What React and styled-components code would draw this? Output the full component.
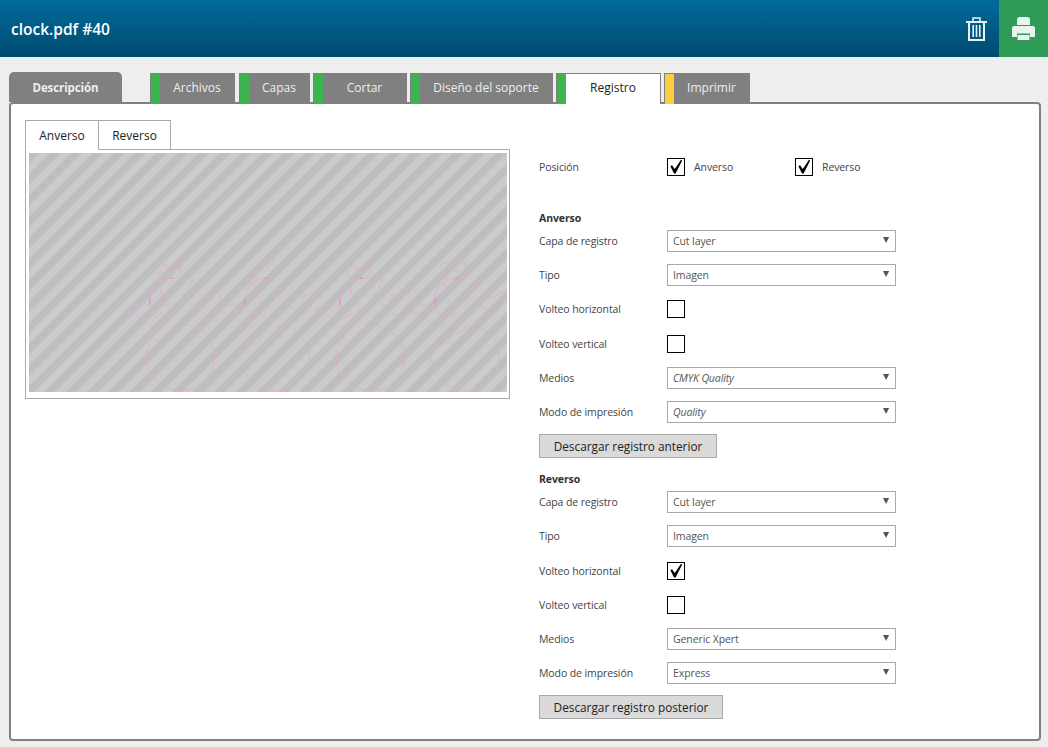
import styled, { createGlobalStyle } from "styled-components";

const GlobalStyle = createGlobalStyle`
  html, body {
    margin: 0;
    padding: 0;
    background: #eeeeee;
  }

  body {
    font-family: "Open Sans", "Liberation Sans", sans-serif;
    font-size: 10.5px;
    letter-spacing: -0.1px;
    color: #333;
  }
`;

const TABS = [
  { label: "Archivos", width: 85, mark: "#3cb44f" },
  { label: "Capas", width: 71, mark: "#3cb44f" },
  { label: "Cortar", width: 94, mark: "#3cb44f" },
  { label: "Diseño del soporte", width: 143, mark: "#3cb44f" },
  { label: "Registro", width: 105, mark: "#3cb44f", active: true },
  { label: "Imprimir", width: 86, mark: "#fccd3e" },
];

const FRONT = [
  { kind: "select", label: "Capa de registro", value: "Cut layer" },
  { kind: "select", label: "Tipo", value: "Imagen" },
  { kind: "check", label: "Volteo horizontal" },
  { kind: "check", label: "Volteo vertical" },
  { kind: "select", label: "Medios", value: "CMYK Quality", italic: true },
  { kind: "select", label: "Modo de impresión", value: "Quality", italic: true },
];

const BACK = [
  { kind: "select", label: "Capa de registro", value: "Cut layer" },
  { kind: "select", label: "Tipo", value: "Imagen" },
  { kind: "check", label: "Volteo horizontal", checked: true },
  { kind: "check", label: "Volteo vertical" },
  { kind: "select", label: "Medios", value: "Generic Xpert" },
  { kind: "select", label: "Modo de impresión", value: "Express" },
];

const App = () => {
  return (
    <>
      <GlobalStyle />
      <Header>
        <Title>clock.pdf #40</Title>
        <TrashButton aria-label="Eliminar">
          <TrashIcon />
        </TrashButton>
        <PrintButton aria-label="Imprimir">
          <PrintIcon />
        </PrintButton>
      </Header>

      <Main>
        <TabBar>
          <DescriptionTab>Descripción</DescriptionTab>
          <StepTabs>
            {TABS.map((tab) => (
              <StepTab key={tab.label} $width={tab.width} $mark={tab.mark} $active={tab.active}>
                <span>{tab.label}</span>
              </StepTab>
            ))}
          </StepTabs>
        </TabBar>

        <Panel>
          <PreviewColumn>
            <SideTabs>
              <SideTab $active>Anverso</SideTab>
              <SideTab>Reverso</SideTab>
            </SideTabs>
            <PreviewBox>
              <Preview />
            </PreviewBox>
          </PreviewColumn>

          <FormColumn>
            <PositionRow>
              <FieldLabel>Posición</FieldLabel>
              <PositionOption>
                <Checkbox $checked />
                Anverso
              </PositionOption>
              <PositionOption>
                <Checkbox $checked />
                Reverso
              </PositionOption>
            </PositionRow>

            <SectionTitle $top={28.5}>Anverso</SectionTitle>
            <Fields rows={FRONT} />
            <DownloadButton $width={178}>Descargar registro anterior</DownloadButton>

            <SectionTitle $top={16}>Reverso</SectionTitle>
            <Fields rows={BACK} />
            <DownloadButton $width={184}>Descargar registro posterior</DownloadButton>
          </FormColumn>
        </Panel>
      </Main>
    </>
  );
};

export default App;

const Fields = ({ rows }) => {
  return rows.map((row) => (
    <FieldRow key={row.label}>
      <FieldLabel>{row.label}</FieldLabel>
      {row.kind === "select" ? (
        <SelectBox $italic={row.italic}>
          {row.value}
          <SelectArrow viewBox="0 0 8 8">
            <path d="M0 1h7L3.5 8z" />
          </SelectArrow>
        </SelectBox>
      ) : (
        <Checkbox $checked={row.checked} />
      )}
    </FieldRow>
  ));
};

const Checkbox = ({ $checked }) => {
  return (
    <CheckSquare>
      {$checked && (
        <svg viewBox="1 1 16 16" width="16" height="16">
          <path d="M3.4 8.2 L5 7.2 L7.8 11 L14 1.8 L15.2 2.4 L8.6 15.4 L7 15.4 Z" fill="#000" />
        </svg>
      )}
    </CheckSquare>
  );
};

const TrashIcon = () => {
  return (
    <svg viewBox="0 0 21 24" width="21" height="24" fill="none" stroke="#e8f0f4">
      <path d="M0 5h21" strokeWidth="2" />
      <path d="M7 4.5V1h7v3.5" strokeWidth="1.5" />
      <path d="M3 5v18h15V5" strokeWidth="2" />
      <path d="M7.2 8v12M10.5 8v12M13.8 8v12" strokeWidth="1.6" />
    </svg>
  );
};

const PrintIcon = () => {
  return (
    <svg viewBox="0 0 23 23" width="23" height="23" fill="#e9f4ee">
      <path d="M5 8V2.5Q5 0 7.5 0H15.5Q18 0 18 2.5V8Z" />
      <path d="M2 9H21Q23 9 23 11V20H18V16.5H5V20H0V11Q0 9 2 9Z" />
      <rect x="5.5" y="18" width="12" height="5" />
    </svg>
  );
};

// the cut path of one clock, repeated along the sheet
const CLOCK_PATH =
  "M35 10 C38 8 41 7 43 8 C45 11 47 15 50 17 C53 13 56 8 58 5 C60 9 61 13 60 17 C59 21 58 23 57 23 C54 24 52 22 50 23 C47 24 45 26 43 25 C40 22 37 20 38 17 C37 14 36 12 35 10 Z " +
  "M43 25 C38 28 33 31 33 33 C31 37 30 43 30 52 C22 49 13 49 5 55 C9 58 12 59 15 60 C18 61 20 61 22 63 C24 67 26 70 28 70 C31 72 33 72 35 72 C39 71 41 69 43 67 C47 64 50 60 50 57 C48 52 45 48 43 43 C42 37 40 32 38 28 " +
  "M36 63 C38 58 43 57 46 60 M30 52 C31 55 35 58 36 63 " +
  "M72 25 C74 29 76 33 78 37 C81 40 84 42 87 42 C91 41 95 38 98 37 C100 38 100 41 100 43 C98 48 95 53 92 57 C90 60 87 61 85 60 C82 59 80 55 78 53 C74 50 68 48 63 43 C64 40 66 37 68 35 C70 32 71 28 72 25 Z " +
  "M33 82 C36 86 39 88 42 88 C45 86 46 80 48 77 C51 76 53 79 55 78 C58 76 60 73 63 70 C81 71 94.5 85 94.5 102.5 C94.5 121 79 135.5 60.5 135.5 C42 135.5 26.5 121 26.5 102.5 C26.5 95 29 88 33 82 Z";

const Preview = () => {
  return (
    <PreviewSvg viewBox="0 0 478 239">
      <defs>
        <pattern id="sheet-stripes" width="15" height="15" patternUnits="userSpaceOnUse" patternTransform="rotate(45)">
          <rect width="15" height="15" fill="#cbcbcb" />
          <rect width="7.5" height="15" fill="#bebebe" />
        </pattern>
      </defs>
      <rect width="478" height="239" fill="url(#sheet-stripes)" />
      {[0, 95, 190, 285].map((offset) => (
        <g key={offset} transform={`translate(${91 + offset} 102)`}>
          <path d={CLOCK_PATH} fill="none" stroke="#deaad6" strokeWidth="0.8" />
          <path d="M30 43v7M50 23h3" fill="none" stroke="#e87ccf" strokeWidth="1" />
        </g>
      ))}
    </PreviewSvg>
  );
};

const Header = styled.header`
  display: flex;
  align-items: stretch;
  height: 57px;
  background: linear-gradient(#006b9c, #004b6e);
`;

const Title = styled.h1`
  flex: 1;
  align-self: center;
  margin: 0;
  padding-left: 11px;
  font-size: 15.5px;
  font-weight: 600;
  letter-spacing: 0;
  color: #fff;
`;

const TrashButton = styled.div`
  display: flex;
  align-items: center;
  justify-content: flex-end;
  padding-right: 12px;
`;

const PrintButton = styled.div`
  display: flex;
  align-items: center;
  justify-content: center;
  width: 49px;
  height: 57px;
  background: #2e9b57;
`;

const Main = styled.main`
  padding: 15px 7px 6px 9px;
`;

const TabBar = styled.nav`
  display: flex;
  align-items: flex-end;
  height: 32px;
  position: relative;
  z-index: 1;
`;

const DescriptionTab = styled.div`
  display: flex;
  align-items: center;
  justify-content: center;
  box-sizing: border-box;
  width: 113px;
  height: 30px;
  margin-bottom: 2px;
  background: #808080;
  border-radius: 5px 5px 0 0;
  font-size: 11.5px;
  font-weight: 700;
  color: #eee;
`;

const StepTabs = styled.div`
  display: flex;
  gap: 3px;
  margin-left: 28px;
`;

const StepTab = styled.div`
  display: flex;
  box-sizing: border-box;
  width: ${(p) => p.$width}px;
  height: 31px;
  border: 1px solid #808080;
  border-bottom: 0;
  background: ${(p) => (p.$active ? "#fff" : "#808080")};
  color: ${(p) => (p.$active ? "#222" : "#eee")};
  font-size: 12px;
  letter-spacing: 0;

  &:first-child {
    margin-right: 1px;
  }

  &::before {
    content: "";
    width: 9px;
    flex: none;
    background: ${(p) => p.$mark};
  }

  span {
    flex: 1;
    text-align: center;
    line-height: 27px;
  }
`;

const Panel = styled.section`
  display: flex;
  box-sizing: border-box;
  height: 639px;
  margin-top: -2px;
  padding: 16px 0 0 14px;
  border: 2px solid #808080;
  border-radius: 4px;
  background: #fff;
`;

const PreviewColumn = styled.div`
  width: 485px;
  flex: none;
`;

const SideTabs = styled.div`
  display: flex;
  position: relative;
  margin-bottom: -1px;
`;

const SideTab = styled.div`
  box-sizing: border-box;
  height: 30px;
  width: ${(p) => (p.$active ? 74 : 72)}px;
  border: 1px solid #a9a9a9;
  border-left-width: ${(p) => (p.$active ? 1 : 0)}px;
  border-bottom-color: ${(p) => (p.$active ? "#fff" : "#a9a9a9")};
  background: #fff;
  text-align: center;
  line-height: 29px;
  font-size: 12px;
  letter-spacing: 0;
  color: #222;
`;

const PreviewBox = styled.div`
  box-sizing: border-box;
  height: 250px;
  padding: 3px 2px 6px 3px;
  border: 1px solid #a9a9a9;
`;

const PreviewSvg = styled.svg`
  display: block;
  width: 478px;
  height: 239px;
`;

const FormColumn = styled.div`
  margin-left: 29px;
  width: 400px;
`;

const FieldLabel = styled.label`
  width: 128px;
  flex: none;
  color: #444;
`;

const PositionRow = styled.div`
  display: flex;
  align-items: center;
  height: 34px;
  margin-top: 30px;
`;

const PositionOption = styled.div`
  display: flex;
  align-items: center;
  gap: 9px;
  width: 128px;
  flex: none;
  color: #444;
`;

const SectionTitle = styled.h2`
  margin: ${(p) => p.$top}px 0 0;
  height: 11px;
  line-height: 11px;
  font-size: 10.5px;
  font-weight: 700;
  color: #333;
`;

const FieldRow = styled.div`
  display: flex;
  align-items: center;
  height: 34.3px;
`;

const SelectBox = styled.div`
  display: flex;
  align-items: center;
  justify-content: space-between;
  box-sizing: border-box;
  width: 229px;
  height: 22px;
  padding: 0 5px;
  border: 1px solid #a9a9a9;
  background: #fff;
  font-style: ${(p) => (p.$italic ? "italic" : "normal")};
  color: #555;
`;

const SelectArrow = styled.svg`
  width: 7px;
  height: 7px;
  margin-bottom: 3px;
  fill: #555;
`;

const CheckSquare = styled.span`
  display: flex;
  align-items: center;
  justify-content: center;
  box-sizing: border-box;
  width: 18px;
  height: 18px;
  flex: none;
  border: 1px solid #000;
  background: #fff;
`;

const DownloadButton = styled.button`
  display: block;
  box-sizing: border-box;
  width: ${(p) => p.$width}px;
  height: 24px;
  margin-top: 4.5px;
  padding: 0;
  border: 1px solid #a9a9a9;
  background: #dadada;
  font-family: inherit;
  font-size: 11.8px;
  letter-spacing: 0;
  color: #222;
`;
